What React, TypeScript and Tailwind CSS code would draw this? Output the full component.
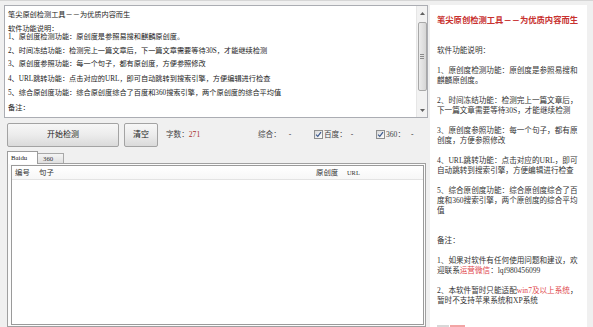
import React from "react";

const leftLines: { t: React.ReactNode; mt: number; h: number }[] = [
  { t: "笔尖原创检测工具－－为优质内容而生", mt: 4, h: 10 },
  { t: "软件功能说明：", mt: 5, h: 8 },
  { t: "1、原创度检测功能：原创度是参照易搜和麒麟原创度。", mt: 0, h: 8 },
  { t: "2、时间冻结功能：检测完上一篇文章后，下一篇文章需要等待30S，才能继续检测", mt: 5, h: 10 },
  { t: "3、原创度参照功能：每一个句子，都有原创度，方便参照修改", mt: 3, h: 10 },
  { t: "4、URL跳转功能：点击对应的URL，即可自动跳转到搜索引擎，方便编辑进行检查", mt: 5, h: 10 },
  { t: "5、综合原创度功能：综合原创度综合了百度和360搜索引擎，两个原创度的综合平均值", mt: 4, h: 10 },
  { t: "备注：", mt: 5, h: 10 },
];

const R = ({ children }: { children: React.ReactNode }) => (
  <span className="text-[#e0474c]">{children}</span>
);

const rightLines: React.ReactNode[] = [
  "",
  "",
  "软件功能说明：",
  "",
  "1、原创度检测功能：原创度是参照易搜和",
  "麒麟原创度。",
  "",
  "2、时间冻结功能：检测完上一篇文章后，",
  "下一篇文章需要等待30S，才能继续检测",
  "",
  "3、原创度参照功能：每一个句子，都有原",
  "创度，方便参照修改",
  "",
  "4、URL跳转功能：点击对应的URL，即可",
  "自动跳转到搜索引擎，方便编辑进行检查",
  "",
  "5、综合原创度功能：综合原创度综合了百",
  "度和360搜索引擎，两个原创度的综合平均",
  "值",
  "",
  "",
  "备注：",
  "",
  "1、如果对软件有任何使用问题和建议，欢",
  <>
    迎联系<R>运营微信</R>：lqf980456099
  </>,
  "",
  <>
    2、本软件暂时只能适配<R>win7及以上系统</R>，
  </>,
  "暂时不支持苹果系统和XP系统",
  "",
];

function Checkbox() {
  return (
    <span className="w-[9px] h-[9px] border border-[#8e8f8f] bg-linear-to-br from-[#d8d8d8] to-[#ffffff] flex items-center justify-center shrink-0">
      <svg width="7" height="7" viewBox="0 0 7 7">
        <path d="M1 3.6 L2.8 5.4 L6 1.2" stroke="#3d5b8f" strokeWidth="1.2" fill="none" />
      </svg>
    </span>
  );
}

function Button({ w, children }: { w: string; children: React.ReactNode }) {
  return (
    <div
      className={`${w} h-[24px] border border-[#a3a3a3] rounded-[2px] bg-linear-to-b from-[#f7f7f7] via-[#ececec] to-[#dadada] flex items-center justify-center text-[8px] text-[#222]`}
    >
      {children}
    </div>
  );
}

export default function App() {
  return (
    <div className="w-[593px] h-[327px] overflow-hidden bg-[#f0f0f0] border-t border-[#d6d6d6] flex font-['Liberation_Serif','Noto_Sans_CJK_SC',serif] text-[#222]">
      {/* Left column */}
      <div className="w-[428px] pl-[4px] pt-[4px] flex flex-col shrink-0">
        {/* text area */}
        <div className="w-[424px] h-[113px] border border-[#abadb3] bg-white flex shrink-0">
          <div className="flex-1 pl-[3px] text-[7.2px] text-[#222] overflow-hidden">
            {leftLines.map((l, i) => (
              <div
                key={i}
                className="whitespace-nowrap"
                style={{ marginTop: l.mt, height: l.h, lineHeight: `${l.h}px` }}
              >
                {l.t}
              </div>
            ))}
          </div>
          {/* scrollbar */}
          <div className="w-[11px] bg-[#f2f2f2] border-l border-[#e6e6e6] flex flex-col items-center">
            <div className="h-[15px] flex items-center justify-center">
              <svg width="5" height="3" viewBox="0 0 5 3">
                <path d="M0 3 L2.5 0 L5 3 Z" fill="#606060" />
              </svg>
            </div>
            <div className="mt-[1px] w-[9px] h-[69px] border border-[#a8a8a8] rounded-[2px] bg-linear-to-r from-[#ececec] to-[#d6d6d6] flex items-center justify-center">
              <div className="flex flex-col gap-[1px]">
                <div className="w-[4px] h-[1px] bg-[#8a8a8a]" />
                <div className="w-[4px] h-[1px] bg-[#8a8a8a]" />
                <div className="w-[4px] h-[1px] bg-[#8a8a8a]" />
              </div>
            </div>
            <div className="flex-1" />
            <div className="h-[13px] flex items-center justify-center">
              <svg width="5" height="3" viewBox="0 0 5 3">
                <path d="M0 0 L2.5 3 L5 0 Z" fill="#606060" />
              </svg>
            </div>
          </div>
        </div>

        {/* buttons row */}
        <div className="mt-[5px] ml-[3px] h-[24px] flex items-center shrink-0 text-[7.6px]">
          <Button w="w-[112px]">开始检测</Button>
          <div className="ml-[5px]">
            <Button w="w-[34px]">清空</Button>
          </div>
          <div className="ml-[8px] w-[92px] flex items-center whitespace-nowrap text-[#444]">
            <span>字数：</span>
            <span className="text-[#a8302c]">271</span>
          </div>
          <div className="w-[56px] flex items-center whitespace-nowrap text-[#444]">
            <span>综合：</span>
            <span className="ml-[8px]">-</span>
          </div>
          <div className="w-[62px] flex items-center whitespace-nowrap text-[#444]">
            <Checkbox />
            <span className="ml-[1px]">百度：</span>
            <span className="ml-[4px]">-</span>
          </div>
          <div className="flex items-center whitespace-nowrap text-[#444]">
            <Checkbox />
            <span className="ml-[1px]">360：</span>
            <span className="ml-[6px]">-</span>
          </div>
        </div>

        {/* tabs */}
        <div className="mt-[4px] ml-[3px] h-[12px] flex items-end shrink-0 relative z-10">
          <div className="w-[31px] h-[13px] -mb-[1px] bg-white border border-b-0 border-[#9c9c9c] text-[6.8px] leading-[11px] pl-[3px] text-[#222]">
            Baidu
          </div>
          <div className="w-[26px] h-[10px] bg-linear-to-b from-[#f4f4f4] to-[#e0e0e0] border border-b-0 border-l-0 border-[#a8a8a8] text-[6.8px] leading-[10px] pl-[5px] text-[#333]">
            360
          </div>
        </div>
        <div className="ml-[3px] w-[419px] h-[164px] border border-[#a0a0a0] bg-[#fbfbfb] pl-[3px] pr-[1px] pt-[1px] pb-[1px] flex shrink-0">
          <div className="flex-1 border border-[#9a9a9a] bg-white flex flex-col">
            <div className="h-[14px] flex items-center border-b border-[#e3e3e3] text-[7.4px] text-[#333] pl-[3px] bg-linear-to-b from-[#ffffff] to-[#f7f7f7]">
              <span className="w-[24px]">编号</span>
              <span className="flex-1">句子</span>
              <span className="w-[31px]">原创度</span>
              <span className="w-[76px] text-[6.4px]">URL</span>
            </div>
          </div>
        </div>
      </div>

      {/* Right info panel */}
      <div className="ml-[2px] mt-[4px] w-[157px] bg-white pl-[7px] pt-[11px] shrink-0 text-[7.6px] text-[#333] overflow-hidden">
        <div className="h-[10px] leading-[10px] whitespace-nowrap text-[8.3px] font-bold text-[#c8312f]">
          笔尖原创检测工具－－为优质内容而生
        </div>
        {rightLines.map((l, i) => (
          <div key={i} className="h-[10px] leading-[10px] whitespace-nowrap">
            {l}
          </div>
        ))}
        <div className="mt-[9px] flex gap-[1px]">
          <div className="w-[12px] h-[3px] bg-[#d8d8d8]" />
          <div className="w-[15px] h-[3px] bg-[#f2a5a5]" />
        </div>
      </div>
    </div>
  );
}
